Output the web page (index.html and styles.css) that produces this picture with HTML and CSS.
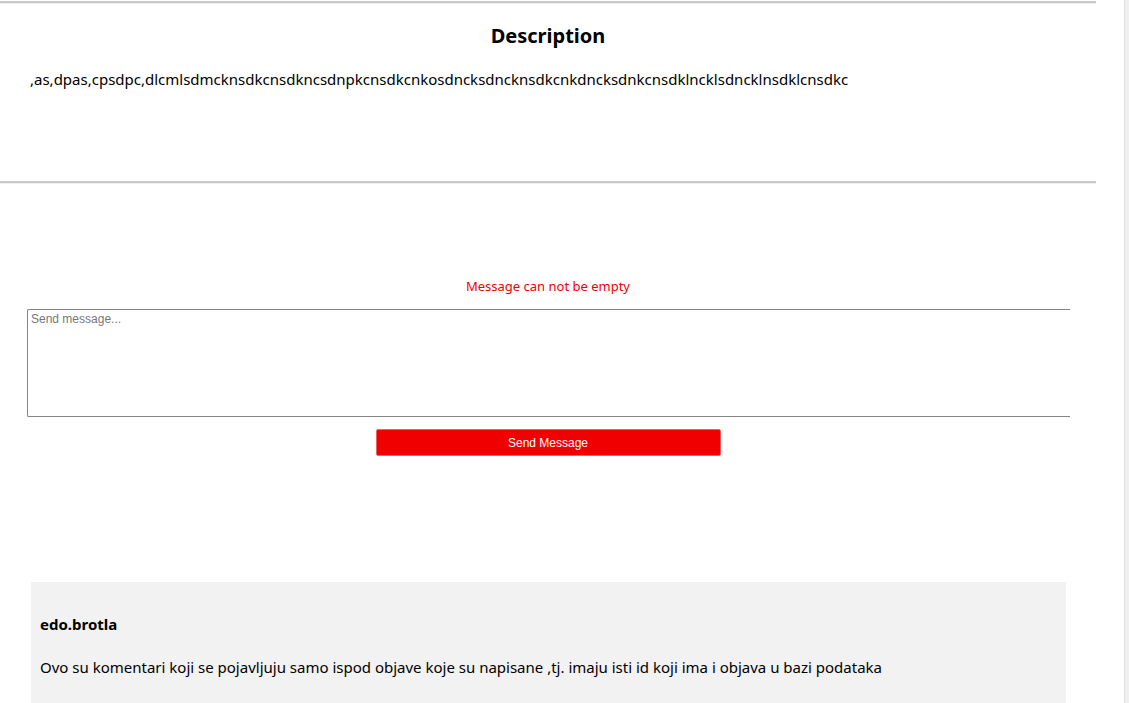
FILE: index.html
```html
<!DOCTYPE html>
<html lang="hr">
<head>
<meta charset="utf-8">
<title>Post</title>
<link rel="stylesheet" href="styles.css">
</head>
<body>
<div class="page">
  <main class="content">
    <hr class="rule rule-top">
    <section class="desc">
      <h2 class="desc-title">Description</h2>
      <p class="desc-text">,as,dpas,cpsdpc,dlcmlsdmcknsdkcnsdkncsdnpkcnsdkcnkosdncksdncknsdkcnkdncksdnkcnsdklncklsdncklnsdklcnsdkc</p>
    </section>
    <hr class="rule rule-mid">
    <section class="compose">
      <p class="error">Message can not be empty</p>
      <textarea class="msg" placeholder="Send message..."></textarea>
      <button class="send" type="button">Send Message</button>
    </section>
    <section class="comments">
      <div class="comment">
        <h4 class="comment-user">edo.brotla</h4>
        <p class="comment-text">Ovo su komentari koji se pojavljuju samo ispod objave koje su napisane ,tj. imaju isti id koji ima i objava u bazi podataka</p>
      </div>
    </section>
  </main>
  <div class="gutter"></div>
</div>
</body>
</html>
```
FILE: styles.css
```css
html, body {
  margin: 0;
  padding: 0;
  background: #ffffff;
  height: 100%;
  overflow: hidden;
}
body {
  font-family: "Noto Sans", "Open Sans", sans-serif;
  color: #000;
}
.page {
  display: flex;
  height: 703px;
}
.content {
  width: 1096px;
  flex: none;
  padding-top: 1px;
}
.gutter {
  flex: 1;
  margin-left: 28px;
  background: #f0f0f0;
  border-left: 1px solid #e2e2e2;
}
.rule {
  margin: 0;
  height: 0;
  border: 0;
  border-top: 2px solid #c9c9c9;
  border-bottom: 1px solid #eeeeee;
}
.desc {
  height: 177px;
  box-sizing: border-box;
  padding-top: 19px;
}
.desc-title {
  margin: 0;
  text-align: center;
  font-size: 20px;
  line-height: 26px;
  font-weight: 700;
}
.desc-text {
  margin: 20px 0 0 30px;
  font-size: 15px;
  line-height: 20px;
}
.compose {
  display: flex;
  flex-direction: column;
  align-items: center;
  padding-top: 93px;
}
.error {
  margin: 0 0 14px;
  color: #ee0000;
  font-size: 13px;
  line-height: 18px;
}
.msg {
  box-sizing: border-box;
  width: 1043px;
  height: 108px;
  margin: 0 0 0 1px;
  padding: 2px 3px;
  border: 1px solid #858585;
  border-right: 0;
  border-radius: 2px 0 0 2px;
  resize: none;
  font-family: "Liberation Sans", Arial, sans-serif;
  font-size: 12px;
}
.msg::placeholder {
  color: #777;
}
.send {
  margin-top: 12px;
  width: 345px;
  height: 27px;
  background: #f00000;
  border: 1px solid #f06060;
  border-radius: 2px;
  color: #ffffff;
  font-family: "Liberation Sans", Arial, sans-serif;
  font-size: 12px;
}
.comments {
  padding: 126px 30px 0 31px;
}
.comment {
  background: #f2f2f2;
  padding: 33px 9px 30px;
}
.comment-user {
  margin: 0;
  font-size: 15px;
  line-height: 18px;
  font-weight: 700;
}
.comment-text {
  margin: 24px 0 0;
  font-size: 15px;
  line-height: 20px;
}
```
